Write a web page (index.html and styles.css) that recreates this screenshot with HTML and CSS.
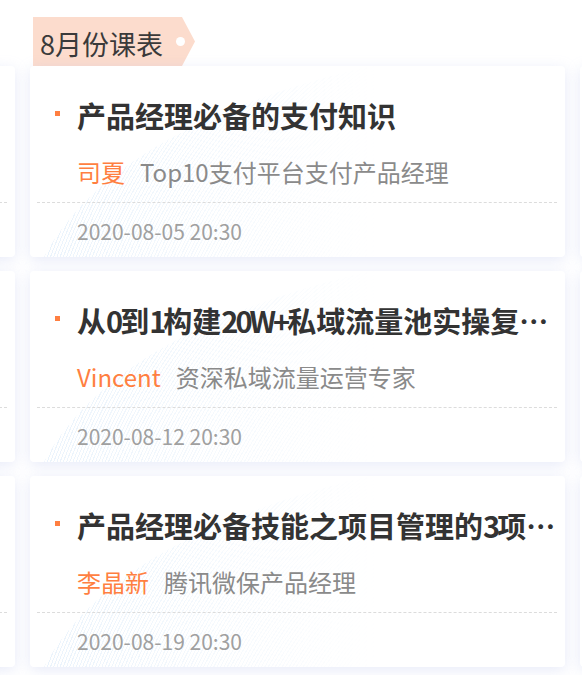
FILE: index.html
```html
<!DOCTYPE html>
<html lang="zh-CN">
<head>
  <meta charset="UTF-8">
  <meta name="viewport" content="width=device-width, initial-scale=1.0">
  <title>课表</title>
  <link rel="stylesheet" href="styles.css">
</head>
<body>
  <div class="track">
    <section class="month">
      <div class="tag"><span class="tag-text">7月份课表</span><i class="tag-dot"></i></div>
      <div class="card">
        <div class="wave"></div>
        <div class="card-title"><i class="dot"></i><h3>用户增长的底层逻辑</h3></div>
        <div class="card-author"><span class="name">王磊</span><span class="desc">资深增长产品专家</span></div>
        <div class="card-date">2020-07-08 20:30</div>
      </div>
      <div class="card">
        <div class="wave"></div>
        <div class="card-title"><i class="dot"></i><h3>数据分析入门实战</h3></div>
        <div class="card-author"><span class="name">陈晨</span><span class="desc">数据产品经理</span></div>
        <div class="card-date">2020-07-15 20:30</div>
      </div>
      <div class="card">
        <div class="wave"></div>
        <div class="card-title"><i class="dot"></i><h3><span class="en">B</span>端产品设计方法论</h3></div>
        <div class="card-author"><span class="name">刘洋</span><span class="desc">SaaS产品负责人</span></div>
        <div class="card-date">2020-07-22 20:30</div>
      </div>
    </section>

    <section class="month">
      <div class="tag"><span class="tag-text">8月份课表</span><i class="tag-dot"></i></div>
      <div class="card">
        <div class="wave"></div>
        <div class="card-title"><i class="dot"></i><h3>产品经理必备的支付知识</h3></div>
        <div class="card-author"><span class="name">司夏</span><span class="desc">Top10支付平台支付产品经理</span></div>
        <div class="card-date">2020-08-05 20:30</div>
      </div>
      <div class="card">
        <div class="wave"></div>
        <div class="card-title"><i class="dot"></i><h3>从<span class="en">0</span>到<span class="en">1</span>构建<span class="en">20W+</span>私域流量池实操复盘分享</h3></div>
        <div class="card-author"><span class="name">Vincent</span><span class="desc">资深私域流量运营专家</span></div>
        <div class="card-date">2020-08-12 20:30</div>
      </div>
      <div class="card">
        <div class="wave"></div>
        <div class="card-title"><i class="dot"></i><h3>产品经理必备技能之项目管理的<span class="en">3</span>项核心能力</h3></div>
        <div class="card-author"><span class="name">李晶新</span><span class="desc">腾讯微保产品经理</span></div>
        <div class="card-date">2020-08-19 20:30</div>
      </div>
    </section>

    <section class="month">
      <div class="tag"><span class="tag-text">9月份课表</span><i class="tag-dot"></i></div>
      <div class="card">
        <div class="wave"></div>
        <div class="card-title"><i class="dot"></i><h3>需求分析与优先级管理</h3></div>
        <div class="card-author"><span class="name">周婷</span><span class="desc">高级产品经理</span></div>
        <div class="card-date">2020-09-02 20:30</div>
      </div>
      <div class="card">
        <div class="wave"></div>
        <div class="card-title"><i class="dot"></i><h3>内容社区的冷启动</h3></div>
        <div class="card-author"><span class="name">Kevin</span><span class="desc">社区运营总监</span></div>
        <div class="card-date">2020-09-09 20:30</div>
      </div>
      <div class="card">
        <div class="wave"></div>
        <div class="card-title"><i class="dot"></i><h3>商业化产品设计实践</h3></div>
        <div class="card-author"><span class="name">赵楠</span><span class="desc">商业化产品专家</span></div>
        <div class="card-date">2020-09-16 20:30</div>
      </div>
    </section>
  </div>
</body>
</html>
```
FILE: styles.css
```css
* {
  margin: 0;
  padding: 0;
  box-sizing: border-box;
}

body {
  width: 582px;
  height: 675px;
  overflow: hidden;
  background: #fff;
  font-family: "Noto Sans CJK SC", "Noto Sans", sans-serif;
  color: #333;
}

/* carousel, scrolled so the 8月 column is in view */
.track {
  display: flex;
  gap: 15px;
  margin-left: -520px;
  padding-top: 17px;
}

.month {
  flex: 0 0 535px;
  width: 535px;
  min-width: 0;
  display: flex;
  flex-direction: column;
}

.tag {
  display: flex;
  align-items: center;
  width: 162px;
  height: 49px;
  margin-left: 3px;
  padding: 0 10px 0 7px;
  background: #fcdccd;
  clip-path: polygon(0 0, 149px 0, 100% 50%, 149px 100%, 0 100%);
}

.tag-text {
  font-size: 27px;
  line-height: 1;
  color: #3a3a3a;
  padding-top: 4px;
}

.tag-dot {
  width: 9px;
  height: 9px;
  margin-left: auto;
  border-radius: 50%;
  background: #fff;
}

.card {
  position: relative;
  height: 191px;
  min-width: 0;
  margin-bottom: 14px;
  background: #fff;
  border-radius: 4px;
  overflow: hidden;
  box-shadow: 0 3px 14px rgba(170, 180, 230, 0.28);
}

/* faint line pattern in the lower left of each card */
.wave {
  position: absolute;
  inset: 0;
  background:
    repeating-radial-gradient(circle at 640px 420px, rgba(150, 195, 238, 0.2) 0 1px, transparent 1px 3px);
  clip-path: path('M14 191 C 55 115, 150 45, 340 0 L 535 0 L 535 191 Z');
  -webkit-mask-image: linear-gradient(to right, #000 0%, rgba(0, 0, 0, 0.45) 35%, transparent 65%);
  mask-image: linear-gradient(to right, #000 0%, rgba(0, 0, 0, 0.45) 35%, transparent 65%);
}

.card-title,
.card-author,
.card-date {
  position: relative;
}

.card-title {
  display: flex;
  align-items: center;
  margin-top: 29px;
  padding: 0 6px 0 25px;
  height: 40px;
}

.dot {
  flex: 0 0 5px;
  height: 5px;
  margin-right: 17px;
  margin-top: -4px;
  background: #ff7f41;
}

.card-title h3 {
  flex: 1;
  min-width: 0;
  font-size: 29px;
  font-weight: 700;
  color: #333;
  white-space: nowrap;
  overflow: hidden;
  text-overflow: ellipsis;
}

/* latin runs in titles sit tighter than the CJK */
.card-title .en {
  letter-spacing: -3px;
}

.card-author {
  display: flex;
  align-items: center;
  height: 49px;
  margin: 19px 8px 0 7px;
  padding: 0 0 14px 40px;
  font-size: 24px;
  border-bottom: 1px dashed #dcdcdc;
}

.name {
  color: #ff7f41;
  margin-right: 15px;
}

.desc {
  color: #8a8a8a;
}

.card-date {
  margin-top: 14px;
  padding-left: 47px;
  font-size: 21px;
  line-height: 28px;
  color: #a0a0a0;
}
```
